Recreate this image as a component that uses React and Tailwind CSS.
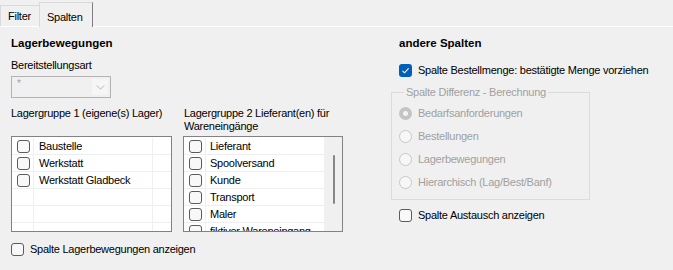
import { useState } from "react";

const lager = ["Baustelle", "Werkstatt", "Werkstatt Gladbeck", "", "", ""];
const lieferanten = ["Lieferant", "Spoolversand", "Kunde", "Transport", "Maler", "fiktiver Wareneingang"];
const radios = ["Bedarfsanforderungen", "Bestellungen", "Lagerbewegungen", "Hierarchisch (Lag/Best/Banf)"];

function Box({ checked, onClick }) {
  if (checked) {
    return (
      <span onClick={onClick} className="flex h-[13px] w-[13px] shrink-0 items-center justify-center rounded-[3px] bg-[#005fb8]">
        <svg viewBox="0 0 13 13" className="h-[13px] w-[13px]" fill="none" stroke="#fff" strokeWidth="1.1">
          <polyline points="3.5 6.8 5.6 8.8 9.6 4.4" />
        </svg>
      </span>
    );
  }
  return <span onClick={onClick} className="h-[13px] w-[13px] shrink-0 rounded-[3px] border border-[#5b5b5b] bg-[#f8f8f8]" />;
}

function App() {
  const [menge, setMenge] = useState(true);
  const [austausch, setAustausch] = useState(false);
  const [lagerbew, setLagerbew] = useState(false);

  return (
    <div className="h-[270px] w-[673px] overflow-hidden bg-[#f0f0f0] font-['Liberation_Sans',Arial,sans-serif] text-[11px] tracking-[-0.25px] text-black">
      {/* tabs */}
      <div className="flex h-[26px] items-end">
        <div className="flex h-[21px] w-[39px] items-center border-l border-t border-[#d9d9d9] pl-[7px] pt-[1px]">Filter</div>
        <div className="relative z-10 -mb-px flex h-[25px] w-[54px] items-start border-l border-t border-r border-l-[#d9d9d9] border-t-[#d9d9d9] border-r-[#7d7d7d] bg-[#f0f0f0] pl-[7px] pt-[6px]">
          Spalten
        </div>
      </div>

      <div className="flex border-t border-white">
        {/* linke Seite */}
        <div className="w-[391px] pl-[11px]">
          <h2 className="mt-[8px] text-[11.5px] font-bold leading-[16px] tracking-normal">Lagerbewegungen</h2>
          <p className="mt-[6px] leading-[16px]">Bereitstellungsart</p>
          <div className="mt-[3px] flex h-[22px] w-[100px] items-stretch border border-[#b4b4b4] p-[2px]">
            <span className="flex-1 pl-[3px] text-[10px] leading-[10px] text-[#a0a0a0]">*</span>
            <span className="flex w-[16px] items-center justify-center bg-[#f6f6f6]">
              <svg viewBox="0 0 10 6" className="h-[5px] w-[9px]" fill="none" stroke="#a8a8a8" strokeWidth="1">
                <polyline points="0.5 0.5 5 5 9.5 0.5" />
              </svg>
            </span>
          </div>

          <div className="mt-[9px] flex gap-[11px]">
            <div className="flex flex-col">
              <p className="h-[29px] leading-[13px]">Lagergruppe 1 (eigene(s) Lager)</p>
              <div className="h-[96px] w-[161px] overflow-hidden border border-[#828282] bg-white pt-px">
                {lager.map((name, i) => (
                  <div key={i} className="flex h-[17px] border-b border-[#efefef]">
                    <div className="flex w-[22px] items-center border-r border-[#efefef] pl-[5px]">
                      {name && <Box />}
                    </div>
                    <div className="flex w-[119px] items-center border-r border-[#efefef] pl-[5px]">{name}</div>
                  </div>
                ))}
              </div>
            </div>
            <div className="flex flex-col">
              <p className="h-[29px] pl-px leading-[13px]">
                Lagergruppe 2 Lieferant(en) für
                <br />
                Wareneingänge
              </p>
              <div className="flex h-[96px] w-[160px] overflow-hidden border border-[#828282] bg-white">
                <div className="w-[140px] pt-px">
                  {lieferanten.map((name) => (
                    <div key={name} className="flex h-[17px] border-b border-[#efefef]">
                      <div className="flex w-[22px] items-center border-r border-[#efefef] pl-[5px]">
                        <Box />
                      </div>
                      <div className="flex items-center whitespace-nowrap pl-[4px]">{name}</div>
                    </div>
                  ))}
                </div>
                <div className="flex flex-1 justify-center bg-[#f0f0f0] pl-[2px] pt-[18px]">
                  <div className="h-[49px] w-[2px] rounded-full bg-[#878787]" />
                </div>
              </div>
            </div>
          </div>

          <label className="mt-[10px] flex h-[14px] items-center gap-[6px]">
            <Box checked={lagerbew} onClick={() => setLagerbew(!lagerbew)} />
            <span>Spalte Lagerbewegungen anzeigen</span>
          </label>
        </div>

        {/* rechte Seite */}
        <div className="flex-1">
          <h2 className="ml-[8px] mt-[8px] text-[11.5px] font-bold leading-[16px] tracking-normal">andere Spalten</h2>
          <label className="ml-[8px] mt-[12px] flex h-[14px] items-center gap-[6px]">
            <Box checked={menge} onClick={() => setMenge(!menge)} />
            <span>Spalte Bestellmenge: bestätigte Menge vorziehen</span>
          </label>

          <fieldset className="mt-[7px] w-[199px] border border-[#dcdcdc] pb-[5px] pl-[7px] pt-[2px] text-[#a0a0a0]">
            <legend className="ml-[5px] px-[2px] leading-[16px]">Spalte Differenz - Berechnung</legend>
            {radios.map((r, i) => (
              <div key={r} className="flex h-[23px] items-center gap-[6px]">
                {i === 0 ? (
                  <span className="flex h-[13px] w-[13px] items-center justify-center rounded-full bg-[#c4c4c4]">
                    <span className="h-[5px] w-[5px] rounded-full bg-[#f4f4f4]" />
                  </span>
                ) : (
                  <span className="h-[13px] w-[13px] rounded-full border border-[#c8c8c8] bg-[#f7f7f7]" />
                )}
                <span>{r}</span>
              </div>
            ))}
          </fieldset>

          <label className="ml-[8px] mt-[8px] flex h-[14px] items-center gap-[6px]">
            <Box checked={austausch} onClick={() => setAustausch(!austausch)} />
            <span>Spalte Austausch anzeigen</span>
          </label>
        </div>
      </div>
    </div>
  );
}

export default App;
